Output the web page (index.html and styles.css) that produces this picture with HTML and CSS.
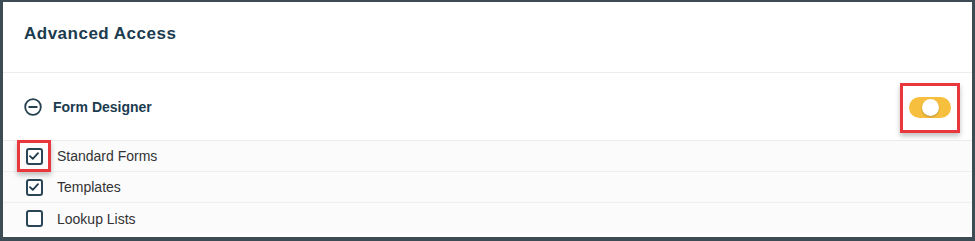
FILE: index.html
```html
<!DOCTYPE html>
<html lang="en">
<head>
    <meta charset="UTF-8">
    <meta name="viewport" content="width=device-width, initial-scale=1.0">
    <title>Advanced Access</title>
    <link rel="stylesheet" href="styles.css">
</head>
<body>
    <div class="panel">
        <div class="panel-header">
            <h2>Advanced Access</h2>
        </div>

        <div class="section-head">
            <div class="section-title">
                <svg class="collapse-icon" width="18" height="18" viewBox="0 0 18 18">
                    <circle cx="9" cy="9" r="7.8" fill="none" stroke="#25404f" stroke-width="1.8"/>
                    <line x1="5.2" y1="9" x2="12.8" y2="9" stroke="#25404f" stroke-width="1.8" stroke-linecap="round"/>
                </svg>
                <span>Form Designer</span>
            </div>
            <div class="highlight toggle-wrap">
                <span class="toggle on"><span class="knob"></span></span>
            </div>
        </div>

        <div class="items">
            <div class="item">
                <span class="highlight check-wrap">
                    <span class="checkbox checked">
                        <svg width="10" height="8" viewBox="0 0 10 8"><polyline points="1,4.2 3.8,6.8 9,1.2" fill="none" stroke="#1f3a4a" stroke-width="1.8" stroke-linecap="round" stroke-linejoin="round"/></svg>
                    </span>
                </span>
                <span class="item-label">Standard Forms</span>
            </div>
            <div class="item">
                <span class="check-wrap">
                    <span class="checkbox checked">
                        <svg width="10" height="8" viewBox="0 0 10 8"><polyline points="1,4.2 3.8,6.8 9,1.2" fill="none" stroke="#1f3a4a" stroke-width="1.8" stroke-linecap="round" stroke-linejoin="round"/></svg>
                    </span>
                </span>
                <span class="item-label">Templates</span>
            </div>
            <div class="item">
                <span class="check-wrap">
                    <span class="checkbox"></span>
                </span>
                <span class="item-label">Lookup Lists</span>
            </div>
        </div>
    </div>
</body>
</html>
```

FILE: styles.css
```css
:root {
    --frame-color: #3d4b55;
    --heading-color: #1b3b4f;
    --text-color: #333333;
    --line-color: #ececec;
    --accent: #f7bf3e;
    --highlight: #e8383d;
}

* {
    box-sizing: border-box;
}

body {
    margin: 0;
    font-family: "Liberation Sans", Arial, sans-serif;
    color: var(--text-color);
    background: #ffffff;
}

.panel {
    width: 975px;
    height: 241px;
    border: 2px solid var(--frame-color);
    border-left-width: 3px;
    border-right-width: 3px;
    border-bottom-width: 4px;
    background: #ffffff;
    overflow: hidden;
}

.panel-header {
    height: 70px;
    display: flex;
    align-items: center;
    padding-left: 21px;
    padding-bottom: 6px;
}

.panel-header h2 {
    margin: 0;
    font-size: 17px;
    font-weight: 700;
    letter-spacing: 0.5px;
    color: var(--heading-color);
}

.section-head {
    height: 68px;
    border-top: 1px solid var(--line-color);
    display: flex;
    align-items: center;
    justify-content: space-between;
    padding: 0 12px 0 21px;
}

.section-title {
    display: flex;
    align-items: center;
    gap: 11px;
    font-size: 14px;
    font-weight: 700;
    color: var(--heading-color);
}

.collapse-icon {
    display: block;
}

.highlight {
    border: 3px solid var(--highlight);
    box-shadow: 0 3px 5px rgba(0, 0, 0, 0.25);
}

.toggle-wrap {
    width: 60px;
    height: 50px;
    display: flex;
    align-items: center;
    justify-content: center;
    margin-top: 2px;
}

.toggle {
    position: relative;
    display: block;
    width: 42px;
    height: 21px;
    border-radius: 11px;
    background: var(--accent);
}

.toggle .knob {
    position: absolute;
    top: 2px;
    left: 13px;
    width: 17px;
    height: 17px;
    border-radius: 50%;
    background: #ffffff;
    box-shadow: 0 1px 2px rgba(0, 0, 0, 0.25);
}

.items {
    border-top: 1px solid var(--line-color);
    background: #fbfbfb;
}

.item {
    height: 31px;
    display: flex;
    align-items: center;
    border-bottom: 1px solid #efefef;
    padding-left: 14px;
}

.item:last-child {
    border-bottom: none;
}

.check-wrap {
    width: 34px;
    height: 32px;
    display: flex;
    align-items: center;
    justify-content: center;
}

.checkbox {
    width: 17px;
    height: 17px;
    border: 2px solid #2a4656;
    border-radius: 3px;
    background: #ffffff;
    display: flex;
    align-items: center;
    justify-content: center;
}

.item-label {
    margin-left: 6px;
    font-size: 14px;
}
```
